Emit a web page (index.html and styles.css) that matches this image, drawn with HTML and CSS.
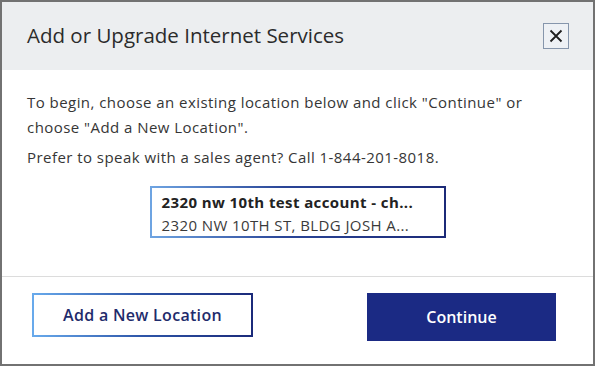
FILE: index.html
```html
<!DOCTYPE html>
<html lang="en">
<head>
    <meta charset="UTF-8">
    <meta name="viewport" content="width=device-width, initial-scale=1.0">
    <title>Add or Upgrade Internet Services</title>
    <link rel="stylesheet" href="styles.css">
</head>
<body>

    <div class="modal">
        <div class="modal-header">
            <h2 class="modal-title">Add or Upgrade Internet Services</h2>
            <button class="close" aria-label="Close">
                <svg width="14" height="14" viewBox="0 0 14 14">
                    <path d="M1.5 1.5L12.5 12.5M12.5 1.5L1.5 12.5" stroke="#1e1e1e" stroke-width="1.8"/>
                </svg>
            </button>
        </div>

        <div class="modal-body">
            <p>To begin, choose an existing location below and click "Continue" or choose "Add a New Location".</p>
            <p>Prefer to speak with a sales agent? Call 1-844-201-8018.</p>

            <div class="locations">
                <div class="location">
                    <div class="location-name">2320 nw 10th test account - ch...</div>
                    <div class="location-address">2320 NW 10TH ST, BLDG JOSH A...</div>
                </div>
            </div>
        </div>

        <div class="modal-footer">
            <button class="btn btn-outline">Add a New Location</button>
            <button class="btn btn-primary">Continue</button>
        </div>
    </div>

</body>
</html>
```

FILE: styles.css
```css
html, body {
    margin: 0;
    height: 100%;
}
body {
    font-family: "Open Sans", sans-serif;
    background: #fff;
    color: #363636;
}
.modal {
    box-sizing: border-box;
    height: 366px;
    width: 595px;
    border: 2px solid #727272;
    display: flex;
    flex-direction: column;
}
.modal-header {
    height: 68px;
    flex-shrink: 0;
    background: #eceef0;
    display: flex;
    align-items: center;
    justify-content: space-between;
    padding: 0 24px 0 25px;
    box-sizing: border-box;
}
.modal-title {
    margin: 0 0 2px;
    font-weight: 400;
    font-size: 20.5px;
    color: #2b2b2b;
}
.close {
    width: 26px;
    height: 26px;
    padding: 0;
    border: 1px solid #8696ac;
    background: #eef1f5;
    display: flex;
    align-items: center;
    justify-content: center;
    cursor: pointer;
}
.modal-body {
    padding: 20px 25px 0;
    height: 207px;
    flex-shrink: 0;
    box-sizing: border-box;
    border-bottom: 1px solid #dcdcdc;
    font-size: 15px;
    line-height: 25px;
    letter-spacing: 0.45px;
}
.modal-body p {
    margin: 0 0 5px;
}
.locations {
    display: flex;
    justify-content: center;
    margin-top: 16px;
}
.location {
    width: 296px;
    height: 52px;
    box-sizing: border-box;
    border: 2px solid;
    border-image: linear-gradient(to right, #6ea4e2, #2a4597 45%, #1c2a78) 1;
    padding: 3px 10px;
    font-size: 15px;
    line-height: 23px;
    letter-spacing: 0.4px;
    color: #222;
    white-space: nowrap;
}
.location-name {
    font-weight: 700;
}
.location-address {
    color: #3a3a3a;
}
.modal-footer {
    flex: 1;
    display: flex;
    justify-content: space-between;
    align-items: flex-start;
    padding: 16px 37px 0 30px;
}
.btn {
    font-family: inherit;
    font-size: 16px;
    font-weight: 600;
    cursor: pointer;
}
.btn-outline {
    width: 221px;
    height: 44px;
    background: #fff;
    color: #1f2c6c;
    letter-spacing: 0.3px;
    border: 2px solid;
    border-image: linear-gradient(to right, #68aaec, #2d55a8 50%, #1b2a7a) 1;
}
.btn-primary {
    width: 189px;
    height: 48px;
    background: #1b2a84;
    color: #fff;
    border: none;
}
```
